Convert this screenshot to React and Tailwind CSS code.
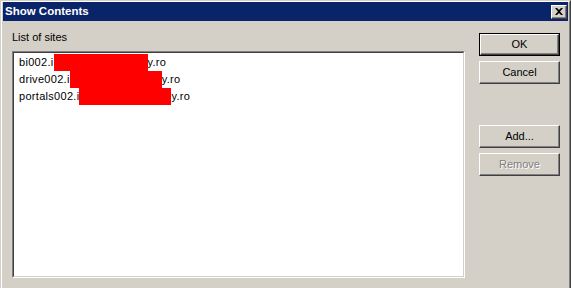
import React from 'react';

function Btn({ label, isDefault, disabled }) {
  const face = (
    <div
      className={`flex items-center justify-center h-full w-full bg-[#d4d0c8] border-t border-l border-t-white border-l-white border-b border-r border-b-[#404040] border-r-[#404040] shadow-[inset_-1px_-1px_0_#808080] ${
        disabled ? 'text-[#808080] [text-shadow:1px_1px_0_#ffffff]' : 'text-black'
      }`}
    >
      {label}
    </div>
  );
  if (isDefault) {
    return <div className="h-[23px] w-[81px] border border-black">{face}</div>;
  }
  return <div className="h-[23px] w-[81px]">{face}</div>;
}

function Row({ pre, red, post }) {
  return (
    <div className="flex h-[17px] items-start leading-[17px] whitespace-nowrap tracking-[0.3px]">
      <span>{pre}</span>
      <span className={`inline-block h-[17px] bg-[#ff0000] ${red}`}></span>
      <span>{post}</span>
    </div>
  );
}

export default function App() {
  return (
    <div className="w-[571px] h-[288px] overflow-hidden bg-[#d4d0c8] text-[11px] font-['Liberation_Sans',Arial,sans-serif] text-black">
      <div className="h-full border-t border-l border-t-[#d4d0c8] border-l-[#d4d0c8] border-r border-r-[#404040]">
        <div className="h-full border-t border-l border-t-white border-l-white border-r border-r-[#808080] pl-px pr-px">
          {/* title bar */}
          <div className="flex items-center h-[19px] bg-[#0a246a] pl-[2px] pr-[1px]">
            <span className="flex-1 text-white font-bold text-[11.5px] leading-none">Show Contents</span>
            <div className="flex items-center justify-center w-[16px] h-[14px] bg-[#d4d0c8] border-t border-l border-t-white border-l-white border-b border-r border-b-[#404040] border-r-[#404040] shadow-[inset_-1px_-1px_0_#808080]">
              <svg width="8" height="7" viewBox="0 0 8 7">
                <path d="M0 0h2l2 2 2-2h2L5 3.5 8 7H6L4 5 2 7H0l3-3.5z" fill="#000" />
              </svg>
            </div>
          </div>

          {/* body */}
          <div className="flex">
            <div className="pl-[9px] pt-[10px]">
              <div className="h-[13px] leading-[13px]">List of sites</div>
              <div className="mt-[7px] w-[453px] h-[227px] border-t border-l border-t-[#808080] border-l-[#808080] border-b border-r border-b-white border-r-white">
                <div className="h-full border-t border-l border-t-[#404040] border-l-[#404040] border-b border-r border-b-[#d4d0c8] border-r-[#d4d0c8] bg-white pl-[5px] pt-[1px]">
                  <Row pre="bi002.i" red="w-[94px]" post="y.ro" />
                  <Row pre="drive002.i" red="w-[92px]" post="y.ro" />
                  <Row pre="portals002.i" red="w-[92px]" post="y.ro" />
                </div>
              </div>
            </div>

            <div className="ml-[14px] pt-[12px] flex flex-col">
              <Btn label="OK" isDefault />
              <div className="mt-[5px]">
                <Btn label="Cancel" />
              </div>
              <div className="mt-[41px]">
                <Btn label="Add..." />
              </div>
              <div className="mt-[5px]">
                <Btn label="Remove" disabled />
              </div>
            </div>
          </div>
        </div>
      </div>
    </div>
  );
}
